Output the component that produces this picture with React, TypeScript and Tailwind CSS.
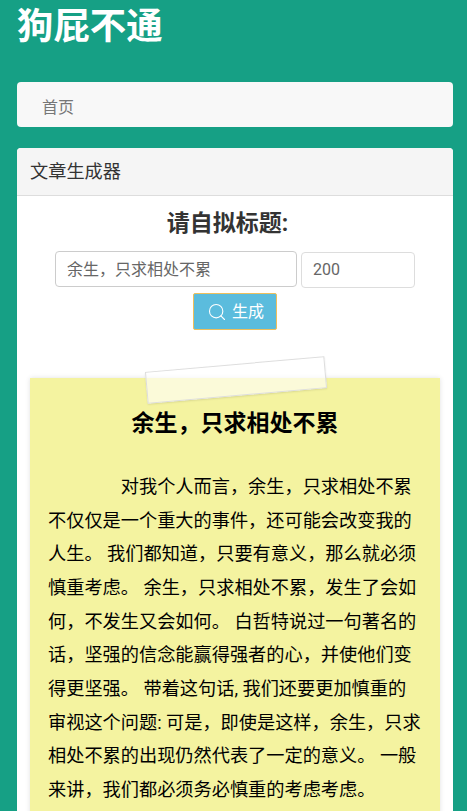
import { Search } from 'lucide-react'

const body =
  '对我个人而言，余生，只求相处不累不仅仅是一个重大的事件，还可能会改变我的人生。 我们都知道，只要有意义，那么就必须慎重考虑。 余生，只求相处不累，发生了会如何，不发生又会如何。 白哲特说过一句著名的话，坚强的信念能赢得强者的心，并使他们变得更坚强。 带着这句话, 我们还要更加慎重的审视这个问题: 可是，即使是这样，余生，只求相处不累的出现仍然代表了一定的意义。 一般来讲，我们都必须务必慎重的考虑考虑。'

export default function App() {
  return (
    <div className="h-[811px] overflow-hidden bg-[#16a085] pr-[14px] pl-[17px] font-['Roboto','Noto_Sans_CJK_SC',sans-serif] text-[#333]">
      <h1 className="m-0 h-[82px] pt-[1px] text-[36.4px] leading-[52px] font-bold text-white">狗屁不通</h1>

      <div className="mb-[21px] h-[45px] rounded-[4px] bg-[#f8f8f8] px-[25px] pt-[13px] text-[16px] leading-[26px] text-[#777]">
        首页
      </div>

      <div className="rounded-[4px] bg-white shadow-[0_1px_1px_rgba(0,0,0,0.05)]">
        <div className="h-[48px] rounded-t-[4px] border-b border-[#ddd] bg-[#f5f5f5] px-[13px] text-[18.2px] leading-[48px]">
          文章生成器
        </div>

        <div className="px-[13px]">
          <h3 className="m-0 pt-[12px] pr-[15px] text-center text-[23px] leading-[32px] font-bold">请自拟标题:</h3>

          <div className="mt-[11px] flex items-start justify-center gap-[4px]">
            <input
              readOnly
              value="余生，只求相处不累"
              className="h-[36px] w-[242px] rounded-[4px] border border-[#ccc] pr-[12px] pb-[2px] pl-[11px] text-[16px] text-[#666] outline-none"
            />
            <input
              readOnly
              value="200"
              className="mt-[1px] h-[36px] w-[114px] rounded-[4px] border border-[#ddd] pr-[12px] pb-[2px] pl-[11px] text-[16px] text-[#666] outline-none"
            />
          </div>

          <div className="mt-[5px] flex justify-center">
            <button className="flex h-[37px] w-[84px] items-center justify-center gap-[5px] rounded-[2px] border border-[#eebf5c] bg-[#5bbcdd] pl-[1px] text-[16px] text-white">
              <Search size={20} strokeWidth={1.3} />
              生成
            </button>
          </div>

          <div className="relative mt-[48px] bg-[#f4f3a0] px-[18px] pb-[40px] shadow-[0_0_5px_rgba(0,0,0,0.12)]">
            <div className="absolute top-[-14px] left-[116px] h-[32px] w-[180px] -rotate-[5deg] border border-[#ddd] bg-white/60 shadow-[0_1px_2px_rgba(0,0,0,0.1)]" />
            <h2 className="m-0 pt-[30px] text-center text-[23px] leading-[32px] font-bold text-black">
              余生，只求相处不累
            </h2>
            <p className="m-0 mt-[30px] indent-[72.8px] text-[18.2px] leading-[33.67px] text-black">{body}</p>
          </div>
        </div>
      </div>
    </div>
  )
}
